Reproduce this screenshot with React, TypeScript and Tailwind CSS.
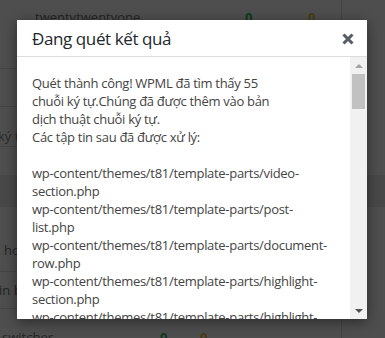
import React from "react";

const lines1 = [
  "Quét thành công! WPML đã tìm thấy 55",
  "chuỗi ký tự.Chúng đã được thêm vào bản",
  "dịch thuật chuỗi ký tự.",
  "Các tập tin sau đã được xử lý:",
];
const lines2 = [
  "wp-content/themes/t81/template-parts/video-",
  "section.php",
  "wp-content/themes/t81/template-parts/post-",
  "list.php",
  "wp-content/themes/t81/template-parts/document-",
  "row.php",
  "wp-content/themes/t81/template-parts/highlight-",
  "section.php",
  "wp-content/themes/t81/template-parts/highlight-",
];

export default function App() {
  return (
    <div className="relative w-[385px] h-[338px] overflow-hidden bg-[#4e4e4e] font-['Open_Sans',sans-serif] text-[13px] text-[#222]">
      {/* dimmed background page */}
      <div className="flex h-[175px]">
        <div className="w-[341px] flex flex-col">
          <div className="h-[69px] shrink-0 border-b border-[#444] flex pt-[8px]">
            <span className="pl-[35px] w-[245px] leading-[18px] text-[#242424]">twentytwentyone</span>
            <span className="w-[63px] leading-[18px] font-bold text-[#0c3a1c]">0</span>
            <span className="leading-[18px] font-bold text-[#4a3a10]">0</span>
          </div>
          <div className="h-[38px] shrink-0 border-b border-[#444]" />
          <div className="h-[40px] shrink-0 border-b border-[#444] flex items-end pb-[1px]">
            <span className="-ml-[2px] leading-[18px] text-[#2a2a2a]">ký tự</span>
          </div>
          <div className="flex-1" />
        </div>
        <div className="flex-1 border-l border-[#444]" />
      </div>
      <div className="h-[32px] bg-[#484848]" />
      <div className="flex h-[131px] overflow-hidden">
        <div className="w-[341px] flex flex-col">
          <div className="h-[65px] shrink-0 border-b border-[#444] flex items-end pb-[12px]">
            <span className="pl-[4px] leading-[18px] text-[#242424]">hoàn</span>
          </div>
          <div className="h-[37px] shrink-0 border-b border-[#444] flex items-center">
            <span className="-ml-[1px] leading-[18px] text-[#242424]">in bản</span>
          </div>
          <div className="flex shrink-0 pt-[19px]">
            <span className="pl-[2px] w-[160px] leading-[18px] text-[#242424]">switcher</span>
            <span className="w-[40px] leading-[18px] font-bold text-[#0c3a1c]">0</span>
            <span className="leading-[18px] font-bold text-[#4a3a10]">0</span>
          </div>
        </div>
        <div className="flex-1 border-l border-[#444]" />
      </div>

      {/* modal */}
      <div className="absolute left-[17px] top-[20px] w-[350px] h-[299px] bg-white shadow-[0_3px_12px_rgba(0,0,0,0.45)] flex flex-col">
        <div className="h-[37px] shrink-0 border-b border-[#dddddd] flex items-center justify-between pl-[15px] pr-[13px]">
          <span className="text-[17px] tracking-[-0.4px] leading-[24px] text-[#23282d] mt-[1px]">Đang quét kết quả</span>
          <svg width="12" height="12" viewBox="0 0 12 12" className="mt-[1px]">
            <path d="M1.5 1.5 L10.5 10.5 M10.5 1.5 L1.5 10.5" stroke="#555d66" strokeWidth="3" strokeLinecap="butt" />
          </svg>
        </div>
        <div className="flex-1 flex min-h-0">
          <div className="flex-1 overflow-hidden pl-[15px] pt-[17px] text-[#444] leading-[18px] tracking-[-0.3px] whitespace-nowrap">
            {lines1.map((l, i) => (
              <div key={"a" + i}>{l}</div>
            ))}
            <div className="h-[18px]" />
            {lines2.map((l, i) => (
              <div key={"b" + i}>{l}</div>
            ))}
          </div>
          <div className="w-[17px] shrink-0 bg-[#f1f1f1] flex flex-col items-center">
            <div className="h-[17px] w-full flex items-center justify-center">
              <div className="w-0 h-0 border-l-[4px] border-r-[4px] border-b-[4px] border-l-transparent border-r-transparent border-b-[#a3a3a3]" />
            </div>
            <div className="w-[13px] h-[35px] bg-[#c1c1c1]" />
            <div className="flex-1" />
            <div className="h-[17px] w-full flex items-center justify-center">
              <div className="w-0 h-0 border-l-[4px] border-r-[4px] border-t-[4px] border-l-transparent border-r-transparent border-t-[#505050]" />
            </div>
          </div>
        </div>
      </div>
    </div>
  );
}
